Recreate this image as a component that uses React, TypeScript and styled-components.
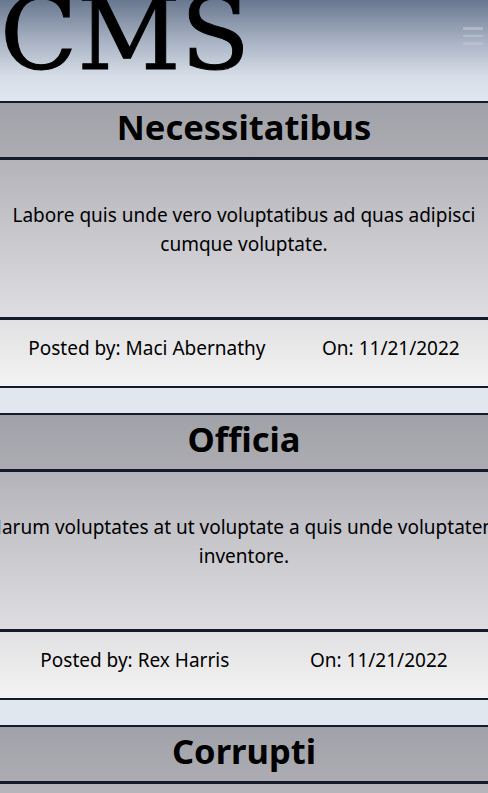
import React from "react";
import styled, { createGlobalStyle } from "styled-components";

const GlobalStyle = createGlobalStyle`
  *, *::before, *::after { box-sizing: border-box; }
  html, body { margin: 0; padding: 0; }
  body {
    background: #e0e7ef;
    font-family: "Noto Sans", "Open Sans", sans-serif;
    color: #000;
    overflow-x: hidden;
  }
`;

const Header = styled.header`
  height: 101px;
  display: flex;
  justify-content: space-between;
  align-items: flex-start;
  background: linear-gradient(to bottom, #68778f 0%, #a7b1c2 40%, #d6dde7 75%, #e0e7ef 100%);
  overflow: hidden;
`;

const Logo = styled.h1`
  margin: -16px 0 0 0;
  font-family: "DejaVu Serif", serif;
  font-weight: 400;
  font-size: 101px;
  line-height: 1;
  -webkit-text-stroke: 1px #000;
`;

const Burger = styled.button`
  margin: 27px 5px 0 0;
  padding: 0;
  width: 20px;
  display: flex;
  flex-direction: column;
  gap: 5px;
  background: none;
  border: none;
  opacity: 0.6;
  filter: blur(0.6px);
`;

const BurgerBar = styled.span`
  display: block;
  height: 2.5px;
  background: #c3c8d2;
`;

const Feed = styled.main`
  display: flex;
  flex-direction: column;
  gap: 25px;
`;

const Card = styled.article`
  border-top: 2px solid #151b2b;
  border-bottom: 2px solid #151b2b;
`;

const Title = styled.h2`
  margin: 0;
  height: 57px;
  padding-bottom: 7px;
  display: flex;
  align-items: center;
  justify-content: center;
  background: linear-gradient(to bottom, #a1a1a9, #acacb2);
  border-bottom: 3px solid #151b2b;
  font-size: 34.5px;
  font-weight: 700;
`;

const Body = styled.div`
  height: 160px;
  padding-bottom: 18px;
  display: flex;
  align-items: center;
  justify-content: center;
  background: linear-gradient(to bottom, #b3b3b9, #dedee2);
  border-bottom: 3px solid #151b2b;
`;

const Text = styled.p`
  flex: none;
  width: 522px;
  margin: 0;
  text-align: center;
  font-size: 19px;
  line-height: 29px;
`;

const Footer = styled.div`
  height: 66px;
  padding-bottom: 10px;
  display: flex;
  align-items: center;
  justify-content: space-around;
  background: linear-gradient(to bottom, #e1e1e3, #f3f3f3);
  font-size: 19px;
`;

const Meta = styled.span``;

const posts = [
  {
    title: "Necessitatibus",
    text: "Labore quis unde vero voluptatibus ad quas adipisci cumque voluptate.",
    author: "Maci Abernathy",
    date: "11/21/2022",
  },
  {
    title: "Officia",
    text: "Harum voluptates at ut voluptate a quis unde voluptatem inventore.",
    author: "Rex Harris",
    date: "11/21/2022",
  },
  {
    title: "Corrupti",
    text: "Quia voluptas est et fugiat nihil quis rerum dolores.",
    author: "Jana Kuhn",
    date: "11/21/2022",
  },
];

export default function App() {
  return (
    <>
      <GlobalStyle />
      <Header>
        <Logo>CMS</Logo>
        <Burger aria-label="menu">
          <BurgerBar />
          <BurgerBar />
          <BurgerBar />
        </Burger>
      </Header>
      <Feed>
        {posts.map((p) => (
          <Card key={p.title}>
            <Title>{p.title}</Title>
            <Body>
              <Text>{p.text}</Text>
            </Body>
            <Footer>
              <Meta>Posted by: {p.author}</Meta>
              <Meta>On: {p.date}</Meta>
            </Footer>
          </Card>
        ))}
      </Feed>
    </>
  );
}
